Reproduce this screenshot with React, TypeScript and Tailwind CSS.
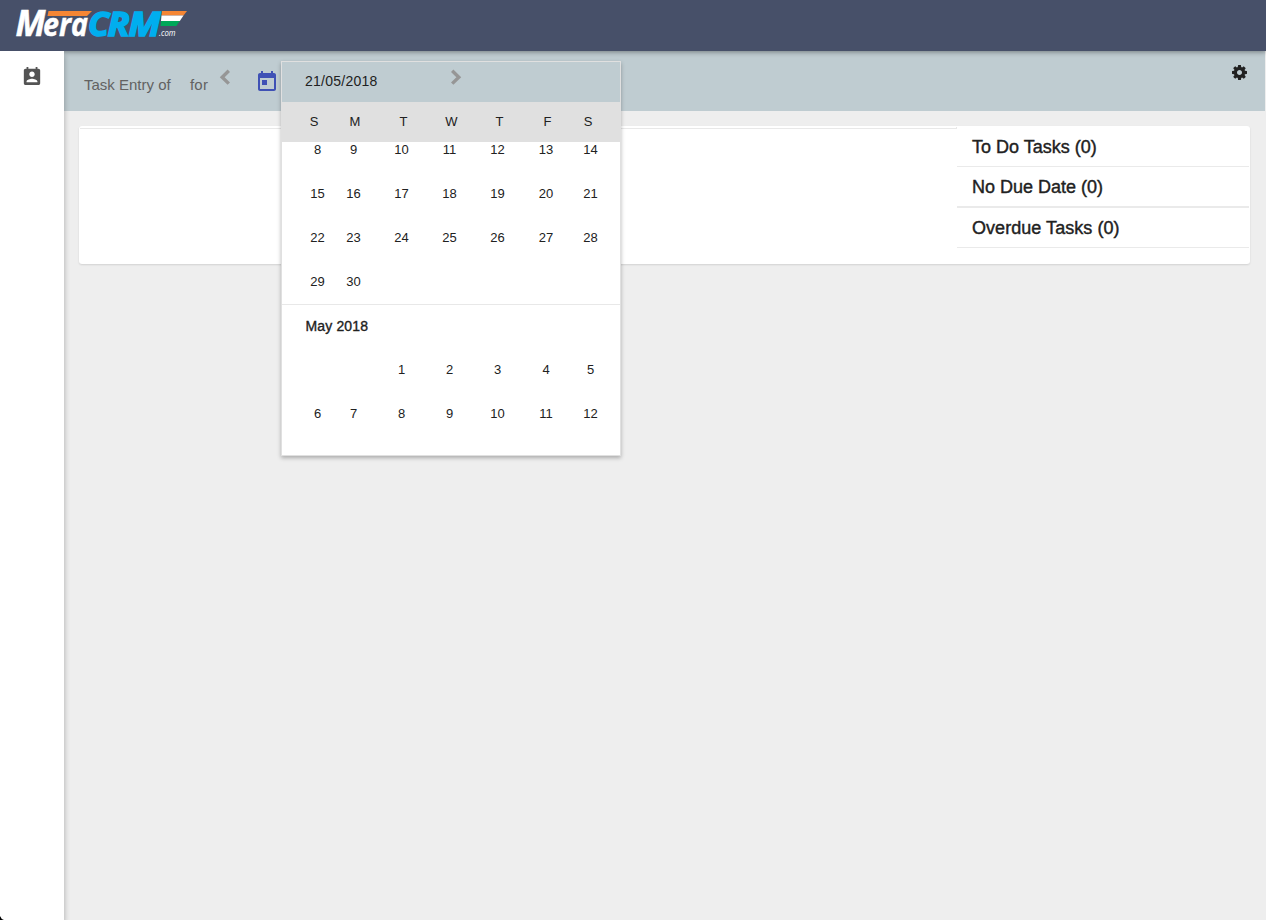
import React from "react";

const weekdays = ["S", "M", "T", "W", "T", "F", "S"];
const april = ["8", "9", "10", "11", "12", "13", "14", "15", "16", "17", "18", "19", "20", "21", "22", "23", "24", "25", "26", "27", "28", "29", "30"];
const may = ["", "", "1", "2", "3", "4", "5", "6", "7", "8", "9", "10", "11", "12"];

function Logo() {
  return (
    <svg width="200" height="51" viewBox="0 0 200 51" aria-label="MeraCRM.com">
      <path d="M48.500 11H92L87 16H47.500Z" fill="#f58634" />
      <g fontFamily="'Open Sans', 'Noto Sans', sans-serif" fontStyle="italic" fontWeight="700">
        <g fill="#fff" stroke="#fff" strokeWidth="0.5">
          <text x="15.500" y="35.800" fontSize="35" textLength="30" lengthAdjust="spacingAndGlyphs">M</text>
          <text x="43" y="35.800" fontSize="33" textLength="45" lengthAdjust="spacingAndGlyphs">era</text>
        </g>
        <g fill="#00aeef" stroke="#00aeef" strokeWidth="1.600" fontSize="34.500">
          <text x="88" y="35.600" textLength="21" lengthAdjust="spacingAndGlyphs">C</text>
          <text x="107.500" y="35.600" textLength="22" lengthAdjust="spacingAndGlyphs">R</text>
          <text x="128.500" y="35.600" textLength="32" lengthAdjust="spacingAndGlyphs">M</text>
        </g>
        <text x="159" y="35.700" fontSize="8.500" fontWeight="400" fill="#fff" textLength="16.500" lengthAdjust="spacingAndGlyphs">.com</text>
      </g>
      <path d="M162 11H187L183.500 15.600H161.500Z" fill="#f58634" />
      <path d="M161.500 15.600H183.500L179.800 21H161Z" fill="#fff" />
      <path d="M161 21H179.800L176.300 26H160.500Z" fill="#00a859" />
    </svg>
  );
}

function Days({ days }: { days: string[] }) {
  return (
    <div className="grid auto-rows-[44px] grid-cols-[36px_36px_60px_36px_60px_37px_52px] pl-[17.5px] text-center text-[13px] leading-[44px]">
      {days.map((d, i) => (
        <span key={i}>{d}</span>
      ))}
    </div>
  );
}

function DatePicker() {
  return (
    <div className="absolute left-[281px] top-[61px] z-20 flex h-[395px] w-[340px] flex-col border border-[#e0e0e0] bg-white text-[#212121] shadow-[0_2px_4px_rgba(0,0,0,0.28)]">
      <div className="flex h-10 shrink-0 items-start bg-[#bfccd1] pl-[23px] text-[14px] tracking-[0.25px]">
        <span className="w-[145px] leading-[38px]">21/05/2018</span>
        <svg width="13" height="18" viewBox="0 0 13 18" className="mt-[6px]">
          <path d="M2.200 2.800L8.800 9.200L2.200 15.600" fill="none" stroke="#969696" strokeWidth="3.400" />
        </svg>
      </div>
      <div className="grid h-10 shrink-0 grid-cols-[41px_41px_56px_40px_56px_40px_41px] bg-[#e0e0e0] pl-[11.5px] text-center text-[13px] leading-[40px]">
        {weekdays.map((d, i) => (
          <span key={i}>{d}</span>
        ))}
      </div>
      <div className="min-h-0 flex-1 overflow-hidden">
        <div className="-mt-[14px] h-[176px]">
          <Days days={april} />
        </div>
        <div className="h-[44px] border-t border-[#e8e8e8] pl-[23.5px] text-[14px] leading-[42px] tracking-[0.14px] [-webkit-text-stroke:0.35px_#212121]">May 2018</div>
        <Days days={may} />
      </div>
    </div>
  );
}

export default function App() {
  return (
    <div className="relative flex h-[920px] w-full flex-col overflow-hidden bg-[#eeeeee] font-['Liberation_Sans',Arial,sans-serif] text-[#212121]">
      <header className="z-10 flex h-[51px] shrink-0 bg-[#475069] shadow-[0_1px_5px_rgba(0,0,0,0.4)]">
        <Logo />
      </header>
      <div className="flex min-h-0 flex-1">
        <aside className="z-[11] flex w-16 shrink-0 flex-col items-center justify-between bg-white pt-[15px] shadow-[1px_4px_5px_rgba(0,0,0,0.22)]">
          <svg width="20" height="20" viewBox="2 0 20 22" fill="#545454">
            <path d="M19 3h-1V1h-2v2H8V1H6v2H5c-1.11 0-2 .9-2 2v14c0 1.1.89 2 2 2h14c1.1 0 2-.9 2-2V5c0-1.1-.9-2-2-2zm-7 3c1.66 0 3 1.34 3 3s-1.34 3-3 3-3-1.34-3-3 1.34-3 3-3zm6 12H6v-1c0-2 4-3.1 6-3.1s6 1.1 6 3.1v1z" />
          </svg>
          <svg width="4" height="4" className="self-start">
            <path d="M0 0Q1 3 4 4H0Z" fill="#000" />
          </svg>
        </aside>
        <main className="flex min-w-0 flex-1 flex-col">
          <div className="mr-px flex h-[60px] shrink-0 items-start bg-[#bfccd1] pl-5 text-[15px] text-[#626262]">
            <span className="w-[106px] pt-[23px] leading-[22px]">Task Entry of</span>
            <span className="w-[28px] pt-[23px] leading-[22px] tracking-[0.2px]">for</span>
            <svg width="14" height="18" viewBox="0 0 14 18" className="mt-[17px]">
              <path d="M10.800 2.800L4.200 9.200L10.800 15.600" fill="none" stroke="#969696" strokeWidth="3.400" />
            </svg>
            <svg width="24" height="24" viewBox="0 0 24 24" fill="#3f51b5" className="ml-[23px] mt-[19px]">
              <path d="M19 3h-1V1h-2v2H8V1H6v2H5c-1.11 0-1.99.9-1.99 2L3 19c0 1.1.89 2 2 2h14c1.1 0 2-.9 2-2V5c0-1.1-.9-2-2-2zm0 16H5V8h14v11zM7 10h5v5H7z" />
            </svg>
            <svg width="15" height="15" viewBox="0 0 1536 1536" fill="#212121" className="ml-auto mr-[18px] mt-[14px]">
              <path d="M1024 768q0-106-75-181t-181-75-181 75-75 181 75 181 181 75 181-75 75-181zm512-109v222q0 12-8 23t-20 13l-185 28q-19 54-39 91 35 50 107 138 10 12 10 25t-9 23q-27 37-99 108t-94 71q-12 0-26-9l-138-108q-44 23-91 38-16 136-29 186-7 28-36 28H657q-14 0-24.500-8.500T621 1506l-28-184q-49-16-90-37l-141 107q-10 9-25 9-14 0-25-11-126-114-165-168-7-10-7-23 0-12 8-23 15-21 51-66.500t54-70.500q-27-50-41-99L29 913q-13-2-21-12.500T0 877V655q0-12 8-23t19-13l186-28q14-46 39-92-40-57-107-138-10-12-10-24 0-10 9-23 26-36 98.500-107.500T337 135q13 0 26 10l138 107q44-23 91-38 16-136 29-186 7-28 36-28h222q14 0 24.500 8.500T915 30l28 184q49 16 90 37l142-107q9-9 24-9 13 0 25 10 129 119 165 170 7 8 7 22 0 12-8 23-15 21-51 66.500t-54 70.500q26 50 41 98l183 28q13 2 21 12.500t8 23.500z" />
            </svg>
          </div>
          <section className="ml-[15px] mr-4 mt-[15px] flex h-[138px] shrink-0 rounded-[3px] bg-white shadow-[0_1px_2px_rgba(0,0,0,0.12)]">
            <div className="ml-px flex-1 pt-px">
              <div className="h-[2px] border-b border-r border-[#e8e8e8]" />
            </div>
            <div className="mr-px w-[292px] text-[18px] [-webkit-text-stroke:0.4px_#212121]">
              <div className="h-[41px] border-b border-[#eaeaea] pl-[15px] leading-[42px]">To Do Tasks (0)</div>
              <div className="h-[41px] border-b-2 border-[#eaeaea] pl-[15px] leading-[40px]">No Due Date (0)</div>
              <div className="h-[40px] border-b border-[#eaeaea] pl-[15px] leading-[40px] tracking-[0.05px]">Overdue Tasks (0)</div>
            </div>
          </section>
        </main>
      </div>
      <DatePicker />
    </div>
  );
}
